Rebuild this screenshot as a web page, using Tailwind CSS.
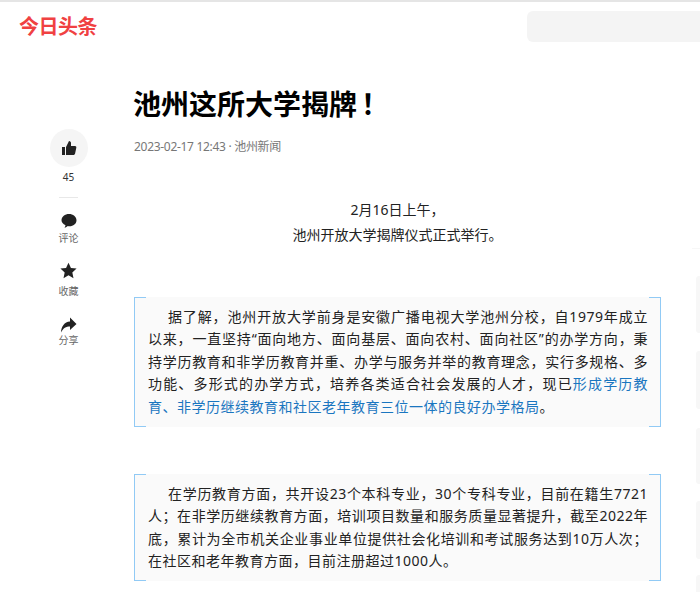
<!doctype html>
<html lang="zh"><head><meta charset="utf-8"><script src="https://cdn.jsdelivr.net/npm/@tailwindcss/browser@4"></script></head>
<body class="bg-white overflow-hidden font-['Noto_Sans','Noto_Sans_CJK_SC',sans-serif]">
<div class="w-[700px] h-[592px] overflow-hidden border-t-2 border-[#e5e5e5]">
<header class="flex justify-between items-start h-[40px] pl-[19px]">
<div class="mt-[12px] text-[20px] leading-[26px] font-bold text-[#f04142] tracking-[-0.5px]">今日头条</div>
<div class="mt-[9px] w-[173px] h-[31px] rounded-l-[6px] bg-[#f4f4f4]"></div>
</header>
<main class="flex">
<aside class="w-[134px] shrink-0 flex flex-col items-center pt-[87px] pl-[3px]">
<div class="w-[38px] h-[38px] rounded-full bg-[#f5f5f5] flex items-center justify-center">
<svg class="w-[16px] h-[16px]" viewBox="0 0 16 16" fill="#222"><path d="M1 7h3v8H1zM5 7l3-6c1.300 0 2 1 2 2v3h4c1 0 1.500.8 1.300 1.700l-1.200 5.800c-.2.900-.8 1.500-1.700 1.500H5z"/></svg>
</div>
<div class="text-[10px] leading-[14px] text-[#333] mt-[3px]">45</div>
<div class="w-[19px] h-px bg-[#e8e8e8] mt-[13px]"></div>
<svg class="w-[16px] h-[16px] mt-[15px]" viewBox="0 0 16 16" fill="#222"><path d="M8 1c4 0 7.500 2.500 7.500 6.300 0 3.500-3.200 6-7 6-.6 0-1.200 0-1.700-.2-.8.900-2 1.500-3.300 1.600.5-.7.900-1.500 1-2.400C2 11.100.5 9.400.5 7.300.5 3.500 4 1 8 1z"/></svg>
<div class="text-[10px] leading-[14px] text-[#666] mt-[2px]">评论</div>
<svg class="w-[17px] h-[17px] mt-[17px]" viewBox="0 0 16 16" fill="#222"><path d="M8 .6l2.300 5 5.300.6-4 3.600 1.100 5.400L8 12.400 3.300 15.200l1.100-5.400-4-3.600 5.300-.6z"/></svg>
<div class="text-[10px] leading-[14px] text-[#666] mt-[5px]">收藏</div>
<svg class="w-[17px] h-[16px] mt-[19px]" viewBox="0 0 17 16" fill="#222"><path d="M10 .5l6.500 6.500L10 13V9.500C6 9.500 3.300 11 1 15.500c.3-6 3.300-10.500 9-11z"/></svg>
<div class="text-[10px] leading-[14px] text-[#666] mt-[0px]">分享</div>
</aside>
<article class="w-[527px] shrink-0">
<h1 class="mt-[41px] text-[28px] leading-[42px] font-bold text-black -ml-[1px]">池州这所大学揭牌<span class="ml-[4px]">！</span></h1>
<div class="mt-[13px] text-[12px] leading-[18px] text-[#777] tracking-[-0.3px]">2023-02-17 12:43 · 池州新闻</div>
<div class="mt-[41px] text-center text-[14px] leading-[25px] text-[#222]"><p>2月16日上午，</p><p>池州开放大学揭牌仪式正式举行。</p></div>
<section class="relative mt-[50px] h-[130px] bg-[#fafafa] pl-[14px] pt-[9px] text-[14px] leading-[22.400px] text-[#222] tracking-[0.5px]">
<span class="absolute left-0 top-0 w-[12px] h-full border-l border-y border-[#91caf5]"></span>
<span class="absolute right-0 top-0 w-[12px] h-full border-r border-y border-[#91caf5]"></span>
<p class="relative w-[500px] indent-[20px] text-justify">据了解，池州开放大学前身是安徽广播电视大学池州分校，自1979年成立以来，一直坚持“面向地方、面向基层、面向农村、面向社区”的办学方向，秉持学历教育和非学历教育并重、办学与服务并举的教育理念，实行多规格、多功能、多形式的办学方式，培养各类适合社会发展的人才，现已<span class="text-[#1a76c0]">形成学历教育、非学历继续教育和社区老年教育三位一体的良好办学格局</span>。</p>
</section>
<section class="relative mt-[47px] h-[107px] bg-[#fafafa] pl-[14px] pt-[9px] text-[14px] leading-[22.400px] text-[#222] tracking-[0.5px]">
<span class="absolute left-0 top-0 w-[12px] h-full border-l border-y border-[#91caf5]"></span>
<span class="absolute right-0 top-0 w-[12px] h-full border-r border-y border-[#91caf5]"></span>
<p class="relative w-[500px] indent-[20px] text-justify">在学历教育方面，共开设23个本科专业，30个专科专业，目前在籍生7721人；在非学历继续教育方面，培训项目数量和服务质量显著提升，截至2022年底，累计为全市机关企业事业单位提供社会化培训和考试服务达到10万人次；在社区和老年教育方面，目前注册超过1000人。</p>
</section>
</article>
<aside class="flex-1 flex flex-col items-end pt-[206px]">
<div class="w-[8px] h-px bg-[#f7f7f7]"></div>
<div class="mt-[27px] w-[4px] h-[57px] rounded-l-[3px] bg-[#f7f7f7] shrink-0"></div>
<div class="mt-[18px] w-[4px] h-[58px] rounded-l-[3px] bg-[#f7f7f7] shrink-0"></div>
<div class="mt-[19px] w-[4px] h-[56px] rounded-l-[3px] bg-[#f7f7f7] shrink-0"></div>
<div class="mt-[17px] w-[4px] h-[58px] rounded-l-[3px] bg-[#f7f7f7] shrink-0"></div>
<div class="mt-[16px] w-[4px] h-[57px] rounded-l-[3px] bg-[#f7f7f7] shrink-0"></div>
</aside>
</main>
</div>
</body></html>
